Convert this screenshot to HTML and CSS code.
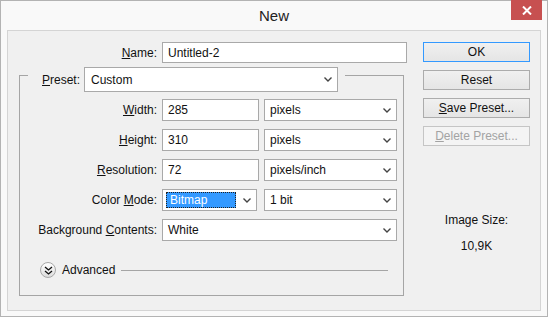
FILE: index.html
```html
<!DOCTYPE html>
<html lang="en">
<head>
    <meta charset="UTF-8">
    <title>New</title>
    <link rel="stylesheet" href="styles.css">
</head>
<body>
    <div class="window">
        <div class="titlebar">
            <span></span>
            <div class="title">New</div>
            <div class="close">
                <svg width="10" height="9" viewBox="0 0 10 9"><path d="M1 0.5 L9 8.5 M9 0.5 L1 8.5" stroke="#fff" stroke-width="2"/></svg>
            </div>
        </div>

        <div class="client">
            <div class="form">
                <div class="name-row">
                    <label><u>N</u>ame:</label>
                    <div class="field">Untitled-2</div>
                </div>

                <div class="group">
                    <div class="preset-row">
                        <label><u>P</u>reset:</label>
                        <div class="field select preset">
                            <span>Custom</span>
                            <svg class="arrow" width="8" height="5" viewBox="0 0 8 5"><path d="M0.5 0.5 L4 4 L7.5 0.5" fill="none" stroke="#444" stroke-width="1.4"/></svg>
                        </div>
                    </div>

                    <div class="rows">
                        <label><u>W</u>idth:</label>
                        <div class="field">285</div>
                        <div class="field select">
                            <span>pixels</span>
                            <svg class="arrow" width="8" height="5" viewBox="0 0 8 5"><path d="M0.5 0.5 L4 4 L7.5 0.5" fill="none" stroke="#444" stroke-width="1.4"/></svg>
                        </div>

                        <label><u>H</u>eight:</label>
                        <div class="field">310</div>
                        <div class="field select">
                            <span>pixels</span>
                            <svg class="arrow" width="8" height="5" viewBox="0 0 8 5"><path d="M0.5 0.5 L4 4 L7.5 0.5" fill="none" stroke="#444" stroke-width="1.4"/></svg>
                        </div>

                        <label><u>R</u>esolution:</label>
                        <div class="field">72</div>
                        <div class="field select">
                            <span>pixels/inch</span>
                            <svg class="arrow" width="8" height="5" viewBox="0 0 8 5"><path d="M0.5 0.5 L4 4 L7.5 0.5" fill="none" stroke="#444" stroke-width="1.4"/></svg>
                        </div>

                        <label>Color <u>M</u>ode:</label>
                        <div class="field select mode">
                            <span class="selected">Bitmap</span>
                            <svg class="arrow" width="8" height="5" viewBox="0 0 8 5"><path d="M0.5 0.5 L4 4 L7.5 0.5" fill="none" stroke="#444" stroke-width="1.4"/></svg>
                        </div>
                        <div class="field select">
                            <span>1 bit</span>
                            <svg class="arrow" width="8" height="5" viewBox="0 0 8 5"><path d="M0.5 0.5 L4 4 L7.5 0.5" fill="none" stroke="#444" stroke-width="1.4"/></svg>
                        </div>

                        <label>Background <u>C</u>ontents:</label>
                        <div class="field select wide">
                            <span>White</span>
                            <svg class="arrow" width="8" height="5" viewBox="0 0 8 5"><path d="M0.5 0.5 L4 4 L7.5 0.5" fill="none" stroke="#444" stroke-width="1.4"/></svg>
                        </div>
                    </div>

                    <div class="advanced">
                        <div class="toggle">
                            <svg width="9" height="9" viewBox="0 0 9 9"><path d="M1 1 L4.5 4 L8 1 M1 5 L4.5 8 L8 5" fill="none" stroke="#111" stroke-width="1.3"/></svg>
                        </div>
                        <span>Advanced</span>
                        <div class="rule"></div>
                    </div>
                </div>
            </div>

            <div class="side">
                <div class="button default">OK</div>
                <div class="button">Reset</div>
                <div class="button"><u>S</u>ave Preset...</div>
                <div class="button disabled"><u>D</u>elete Preset...</div>
                <div class="size-label">Image Size:</div>
                <div class="size-value">10,9K</div>
            </div>
        </div>
    </div>
</body>
</html>
```

FILE: styles.css
```css
body {
    margin: 0;
    font-family: 'Liberation Sans', Arial, sans-serif;
    font-size: 12px;
    color: #111;
}

.window {
    width: 548px;
    height: 317px;
    box-sizing: border-box;
    border: 1px solid #b3b3b3;
    background: #f9f9f9;
    display: flex;
    flex-direction: column;
}

/* Title bar */
.titlebar {
    height: 29px;
    display: grid;
    grid-template-columns: 1fr auto 1fr;
}

.title {
    font-size: 15px;
    color: #222;
    padding-top: 6px;
}

.close {
    justify-self: end;
    width: 31px;
    height: 20px;
    margin-right: 5px;
    margin-top: -1px;
    background: #c75050;
    display: flex;
    justify-content: center;
    align-items: center;
}

/* Client area */
.client {
    flex: 1;
    margin: 0 6px 5px 6px;
    border: 1px solid #d4d4d4;
    background: #f0f0f0;
    padding: 11px 0 0 11px;
    display: flex;
}

.form {
    width: 387px;
}

label {
    text-align: right;
    white-space: nowrap;
}

.field {
    box-sizing: border-box;
    height: 22px;
    border: 1px solid #a9a9a9;
    background: #fff;
    padding: 0 5px;
    display: flex;
    align-items: center;
    justify-content: space-between;
}

.arrow {
    flex: none;
}

.name-row {
    display: grid;
    grid-template-columns: 138px 245px;
    column-gap: 5px;
    align-items: center;
}

.name-row .field {
    height: 21px;
}

/* Preset group box */
.group {
    width: 385px;
    height: 221px;
    box-sizing: border-box;
    margin-top: 12px;
    border: 1px solid #a5a5a5;
}

.preset-row {
    margin: -9px 0 0 8px;
    width: 317px;
    box-sizing: border-box;
    padding: 0 7px 0 14px;
    background: #f0f0f0;
    display: flex;
    align-items: center;
    gap: 4px;
}

.preset {
    width: 254px;
    height: 25px;
    padding-left: 6px;
}

.rows {
    margin-top: 7px;
    display: grid;
    grid-template-columns: 137px 97px 133px;
    column-gap: 5px;
    row-gap: 8px;
    align-items: center;
}

.mode {
    width: 95px;
    padding-left: 3px;
}

.selected {
    background: #3399ff;
    color: #fff;
    width: 70px;
    height: 16px;
    box-sizing: border-box;
    border: 1px dotted #222;
    padding-left: 3px;
    line-height: 14px;
}

.wide {
    grid-column: 2 / 4;
}

.advanced {
    margin: 21px 15px 0 20px;
    display: flex;
    align-items: center;
}

.toggle {
    width: 16px;
    height: 16px;
    box-sizing: border-box;
    border-radius: 50%;
    border: 1px solid #a8a8a8;
    background: linear-gradient(#ffffff, #dcdcdc);
    display: flex;
    justify-content: center;
    align-items: center;
}

.advanced span {
    margin-left: 6px;
}

.rule {
    flex: 1;
    margin-left: 6px;
    border-top: 1px solid #a5a5a5;
}

/* Buttons column */
.side {
    margin-left: 17px;
    width: 107px;
    display: flex;
    flex-direction: column;
    gap: 8px;
    text-align: center;
}

.button {
    height: 20px;
    box-sizing: border-box;
    border: 1px solid #acacac;
    background: linear-gradient(#f0f0f0, #e5e5e5);
    line-height: 18px;
}

.button.default {
    border-color: #3399ff;
}

.button.disabled {
    border-color: #c5c5c5;
    background: #f4f4f4;
    color: #a3a3a3;
}

.size-label {
    margin-top: 59px;
    line-height: 14px;
}

.size-value {
    margin-top: 4px;
    line-height: 14px;
}
```
